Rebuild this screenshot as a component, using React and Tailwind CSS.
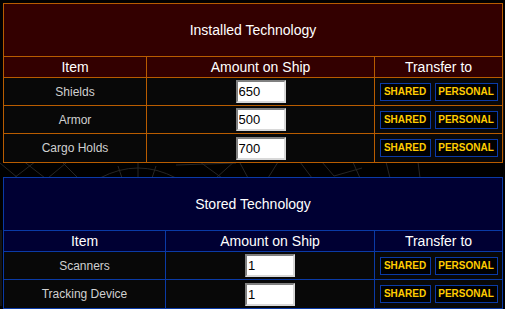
import React from "react";

const font = { fontFamily: '"Liberation Sans", Arial, sans-serif' };

function Btn({ label, w }) {
  return (
    <div
      className={`${w} h-[18px] border border-[#0a3aa6] bg-black flex items-center justify-center text-[10px] font-bold text-[#ffcc00] leading-none`}
    >
      {label}
    </div>
  );
}

function NumInput({ value }) {
  return (
    <input
      defaultValue={value}
      className="w-[50px] h-[23px] bg-white text-black text-[13px] pl-[1px] border-2 border-t-[#808080] border-l-[#808080] border-b-[#d8d8d8] border-r-[#d8d8d8] outline-none leading-none"
      style={font}
    />
  );
}

function Panel({ title, rows, theme }) {
  const orange = theme === "orange";
  const border = orange ? "border-[#b85c00]" : "border-[#0a3aa6]";
  const headBg = orange ? "bg-[#330000]" : "bg-[#000033]";
  const c1 = orange ? "w-[143px]" : "w-[162px]";
  const c2 = orange ? "w-[228px]" : "w-[209px]";
  return (
    <div className={`w-[500px] border ${border}`}>
      <div
        className={`${headBg} h-[53px] border-b ${border} flex items-center justify-center text-white text-[14px]`}
      >
        {title}
      </div>
      <div className={`${headBg} h-[21px] border-b ${border} flex text-white text-[14px]`}>
        <div className={`${c1} border-r ${border} flex items-center justify-center`}>Item</div>
        <div className={`${c2} border-r ${border} flex items-center justify-center`}>
          Amount on Ship
        </div>
        <div className="flex-1 flex items-center justify-center">Transfer to</div>
      </div>
      {rows.map((r, i) => (
        <div
          key={r.name}
          className={`h-[28px] ${i < rows.length - 1 ? `border-b ${border}` : "h-[27px]"} flex bg-[#080808]`}
        >
          <div
            className={`${c1} border-r ${border} flex items-center justify-center text-[12px] text-[#d0d0d0]`}
          >
            {r.name}
          </div>
          <div className={`${c2} border-r ${border} flex items-center justify-center`}>
            <NumInput value={r.value} />
          </div>
          <div className="flex-1 flex items-center justify-center gap-[4px]">
            <Btn label="SHARED" w="w-[51px]" />
            <Btn label="PERSONAL" w="w-[63px]" />
          </div>
        </div>
      ))}
    </div>
  );
}

export default function App() {
  return (
    <div className="relative w-[505px] h-[309px] bg-black overflow-hidden" style={font}>
      <svg
        className="absolute inset-0"
        width="505"
        height="309"
        viewBox="0 0 505 309"
        fill="none"
        stroke="#262626"
        strokeWidth="1"
      >
        <path d="M0 163 L18 178" />
        <path d="M14 178 L40 158" />
        <path d="M22 160 L45 178" />
        <path d="M48 178 L72 158" />
        <path d="M60 160 L78 178" />
        <path d="M100 178 Q138 158 176 178" />
        <path d="M138 160 L138 178" />
        <path d="M118 166 L122 178" />
        <path d="M156 166 L152 178" />
        <path d="M176 165 L236 163" />
        <path d="M200 162 L222 178" />
        <path d="M216 178 L236 160" />
        <path d="M240 163 L248 178" />
        <path d="M268 178 L278 162" />
        <path d="M300 162 L312 178" />
        <path d="M322 162 L334 176 L362 168" />
        <path d="M352 160 L360 178" />
        <path d="M386 162 L390 178" />
        <path d="M418 162 L420 178" />
        <path d="M1 230 L1 306" />
        <path d="M503 60 L503 160" />
        <path d="M20 308 L60 306 L100 308 L140 306 L180 308" />
        <path d="M200 308 L260 306 L320 308 L380 306 L440 308 L480 306" />
      </svg>
      <div className="relative pt-[3px] pl-[3px] flex flex-col gap-[14px]">
        <Panel
          title="Installed Technology"
          theme="orange"
          rows={[
            { name: "Shields", value: "650" },
            { name: "Armor", value: "500" },
            { name: "Cargo Holds", value: "700" },
          ]}
        />
        <Panel
          title="Stored Technology"
          theme="blue"
          rows={[
            { name: "Scanners", value: "1" },
            { name: "Tracking Device", value: "1" },
          ]}
        />
      </div>
    </div>
  );
}
